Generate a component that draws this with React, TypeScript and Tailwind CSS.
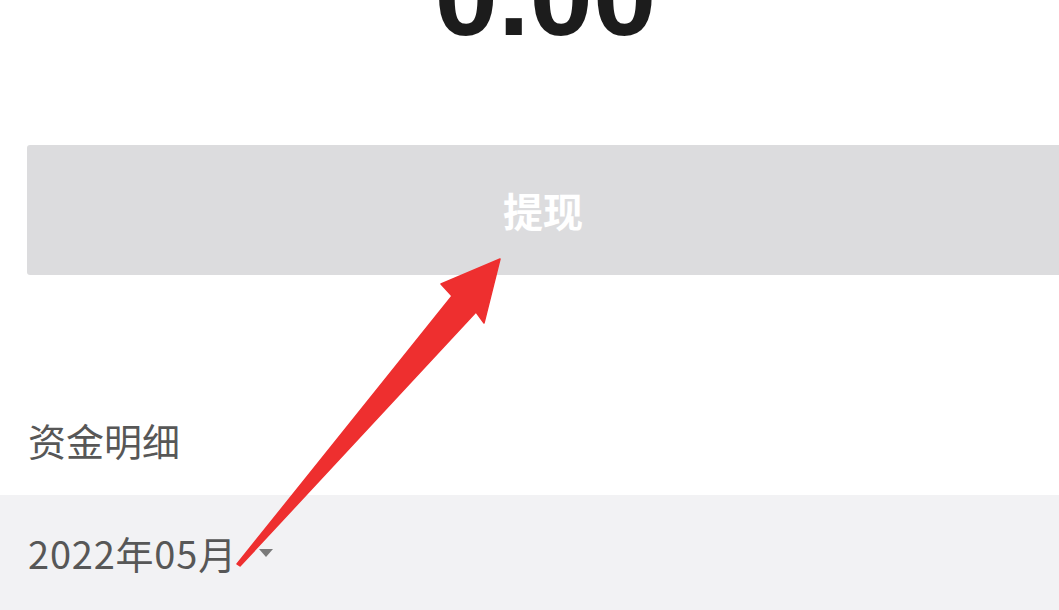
export default function App() {
  return (
    <div
      className="relative h-[610px] w-full overflow-hidden bg-white"
      style={{ fontFamily: '"Noto Sans CJK SC", "Noto Sans", sans-serif' }}
    >
      {/* balance amount, clipped by the top of the screen */}
      <div className="flex h-[145px] justify-center overflow-hidden">
        <div
          className="-mt-[61px] pl-[32px] text-[114px] leading-none font-bold text-[#1c1c1c]"
          style={{ fontFamily: '"Liberation Sans", Arial, sans-serif' }}
        >
          0.00
        </div>
      </div>

      <div className="ml-[27px] flex h-[130px] items-center justify-center rounded-l-[3px] bg-[#dcdcde] text-[40px] font-bold text-white">
        提现
      </div>

      <div className="pt-[146px] pb-[36px] pl-[28px] text-[38px] leading-[38px] text-[#575757]">
        资金明细
      </div>

      <div className="flex h-[160px] items-start bg-[#f2f2f4] pt-[39px] pl-[28px]">
        <span className="text-[38px] leading-[38px] tracking-[0.8px] text-[#575757]">2022年05月</span>
        <span className="mt-[15px] ml-[22px] h-0 w-0 border-x-[7px] border-t-[8px] border-x-transparent border-t-[#7a7a7a]" />
      </div>

      {/* annotation arrow */}
      <svg
        className="pointer-events-none absolute top-0 left-0"
        width="1059"
        height="610"
        viewBox="0 0 1059 610"
      >
        <polygon
          points="500,259 441,284 452,296 237,564 240,566 476,312 484,323"
          fill="#ee2f2f"
          stroke="#ee2f2f"
          strokeWidth="1.5"
          strokeLinejoin="round"
        />
      </svg>
    </div>
  );
}
